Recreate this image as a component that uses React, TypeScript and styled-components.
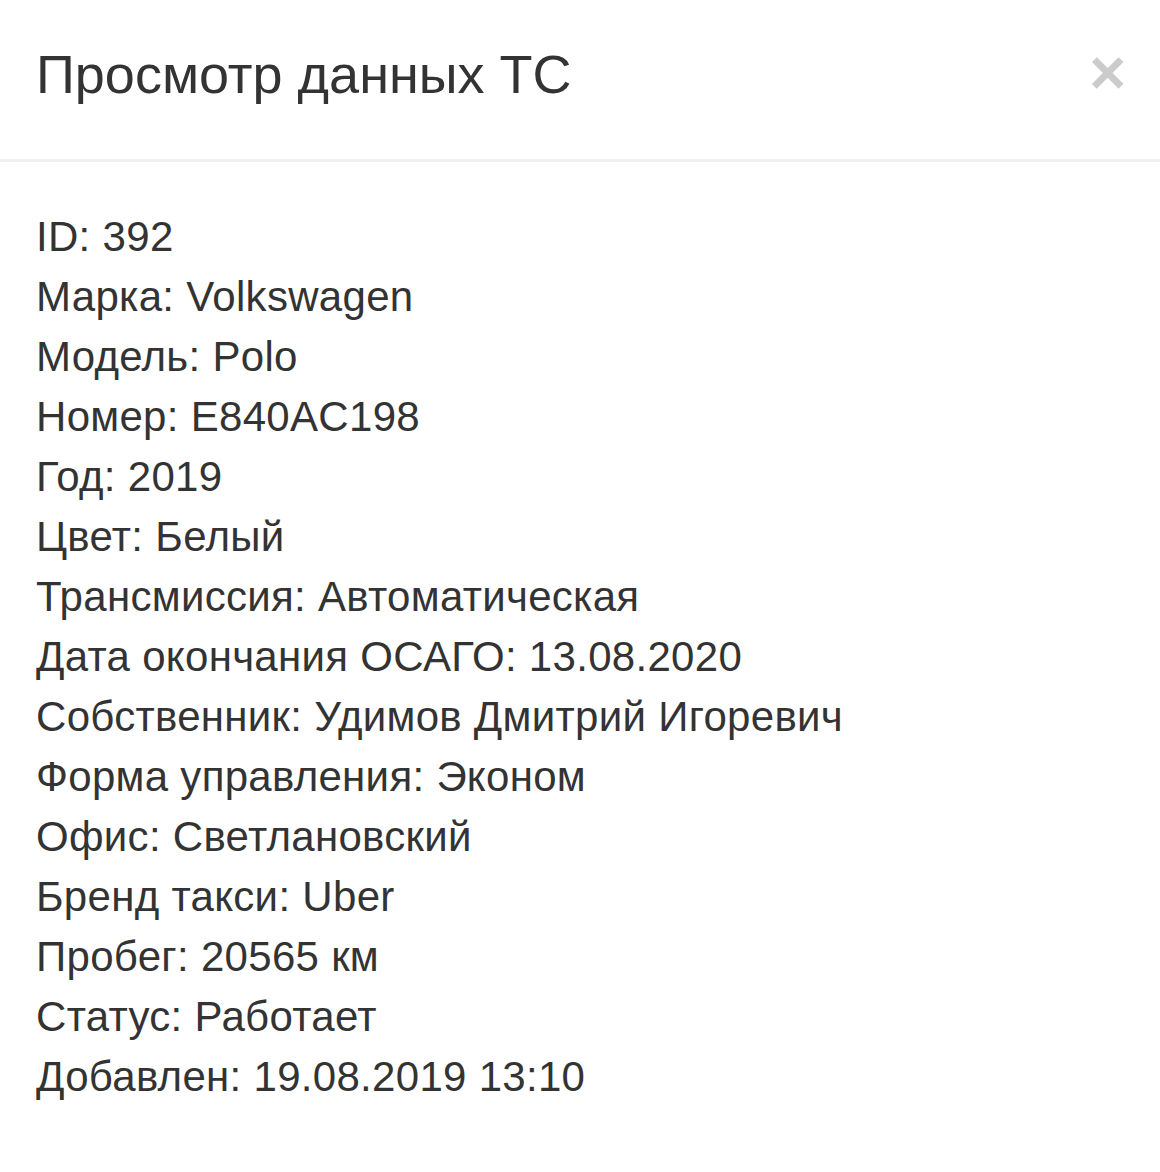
import React from 'react';
import styled, { createGlobalStyle } from 'styled-components';

const GlobalStyle = createGlobalStyle`
  html, body {
    margin: 0;
    padding: 0;
    background: #fff;
  }
  body {
    font-family: "Liberation Sans", Arial, Helvetica, sans-serif;
    color: #333;
  }
`;

const Modal = styled.div`
  width: 1160px;
  min-height: 1172px;
  background: #fff;
`;

const ModalHeader = styled.div`
  display: flex;
  align-items: flex-start;
  justify-content: space-between;
  padding: 36px 34px 46px 36px;
  border-bottom: 3px solid #efefef;
`;

const ModalTitle = styled.h4`
  margin: 0;
  font-size: 54px;
  line-height: 77px;
  font-weight: 400;
  color: #333;
`;

const CloseButton = styled.button`
  margin: 0;
  padding: 0;
  border: 0;
  background: transparent;
  font-family: "Liberation Sans", Arial, sans-serif;
  font-size: 63px;
  font-weight: 700;
  line-height: 72px;
  color: #000;
  opacity: 0.2;
  cursor: pointer;
`;

const ModalBody = styled.div`
  padding: 45px 36px;
`;

const Row = styled.div`
  font-size: 42px;
  line-height: 60px;
  letter-spacing: 0.3px;
  color: #333;
`;

const rows: [string, string][] = [
  ['ID', '392'],
  ['Марка', 'Volkswagen'],
  ['Модель', 'Polo'],
  ['Номер', 'E840AC198'],
  ['Год', '2019'],
  ['Цвет', 'Белый'],
  ['Трансмиссия', 'Автоматическая'],
  ['Дата окончания ОСАГО', '13.08.2020'],
  ['Собственник', 'Удимов Дмитрий Игоревич'],
  ['Форма управления', 'Эконом'],
  ['Офис', 'Светлановский'],
  ['Бренд такси', 'Uber'],
  ['Пробег', '20565 км'],
  ['Статус', 'Работает'],
  ['Добавлен', '19.08.2019 13:10'],
];

export default function App() {
  return (
    <>
      <GlobalStyle />
      <Modal>
        <ModalHeader>
          <ModalTitle>Просмотр данных ТС</ModalTitle>
          <CloseButton aria-label="Закрыть">×</CloseButton>
        </ModalHeader>
        <ModalBody>
          {rows.map(([label, value]) => (
            <Row key={label}>
              {label}: {value}
            </Row>
          ))}
        </ModalBody>
      </Modal>
    </>
  );
}
